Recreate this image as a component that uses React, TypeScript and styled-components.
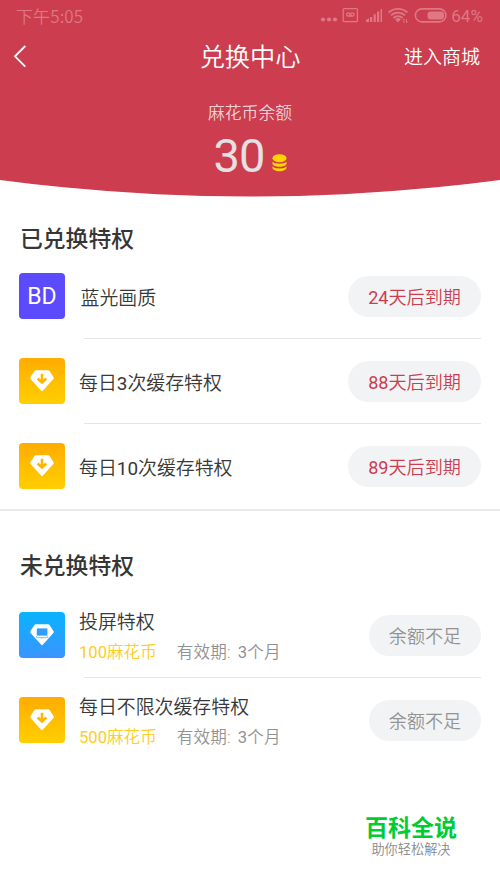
import React from "react";
import styled, { createGlobalStyle } from "styled-components";

const GlobalStyle = createGlobalStyle`
  * { box-sizing: border-box; }
  body {
    margin: 0;
    background: #fff;
    font-family: Roboto, "Noto Sans CJK SC", sans-serif;
    font-weight: 350;
    color: #3a3a3a;
  }
`;

const Screen = styled.div`
  width: 500px;
  height: 888px;
  display: flex;
  flex-direction: column;
  background: #fff;
  overflow: hidden;
`;

const Header = styled.header`
  flex: none;
  height: 197px;
  background: #cc3d4f;
  clip-path: circle(1902px at 50% -1705.5px);
`;

const StatusBar = styled.div`
  display: flex;
  align-items: center;
  justify-content: space-between;
  height: 32px;
  padding: 0 17px 0 16px;
  color: #dd7884;
  line-height: 30px;
`;

const Clock = styled.span`
  font-family: "Noto Sans CJK SC", sans-serif;
  font-size: 17px;
  letter-spacing: 0.1px;
  padding-bottom: 1px;
`;

const StatusIcons = styled.div`
  display: flex;
  align-items: center;
`;

const Battery = styled.span`
  margin-left: 3px;
  font-weight: 400;
  font-size: 17.1px;
`;

const TitleBar = styled.div`
  display: grid;
  grid-template-columns: 1fr auto 1fr;
  align-items: center;
  height: 50px;
  padding: 0 20px 0 13px;
  color: #fff;
`;

const Title = styled.h1`
  margin: 0;
  padding: 1px 0 0;
  margin-right: -7px;
  font-size: 25.2px;
  font-weight: 350;
  line-height: 50px;
`;

const StoreLink = styled.span`
  justify-self: end;
  padding-top: 1px;
  font-size: 19px;
  line-height: 50px;
`;

const BalanceLabel = styled.div`
  margin-top: 17px;
  text-align: center;
  font-size: 16.8px;
  line-height: 28px;
  color: #ecd0d3;
`;

const Balance = styled.div`
  display: flex;
  justify-content: center;
  align-items: center;
  height: 58px;
  color: #e3e1e1;
`;

const Amount = styled.span`
  margin-right: 7px;
  font-size: 47px;
  font-weight: 400;
  line-height: 58px;
  letter-spacing: -0.8px;
`;

const CoinIcon = styled.svg`
  margin-top: 13px;
`;

const Section = styled.section<{ $divided?: boolean }>`
  flex: none;
  padding-bottom: ${(p) => (p.$divided ? 1 : 0)}px;
  border-bottom: ${(p) => (p.$divided ? "2px solid #e9e9e9" : "none")};
`;

const SectionTitle = styled.h2<{ $height: number; $top: number }>`
  margin: 0;
  height: ${(p) => p.$height}px;
  padding: ${(p) => p.$top}px 0 0 20px;
  font-size: 22.8px;
  font-weight: 500;
  line-height: 34px;
  color: #363636;
`;

const Row = styled.div`
  display: grid;
  grid-template-columns: 46px 1fr auto;
  column-gap: 14px;
  align-items: center;
  height: 84px;
  padding: 0 19px;
`;

const Divider = styled.div`
  height: 1px;
  margin: 0 19px 0 84px;
  background: #e6e6e6;
`;

const Tile = styled.div<{ $bg: string }>`
  display: flex;
  align-items: center;
  justify-content: center;
  width: 46px;
  height: 46px;
  border-radius: 4px;
  background: ${(p) => p.$bg};
  color: #fff;
  font-size: 23px;
  font-weight: 400;
`;

const Details = styled.div<{ $indent?: boolean }>`
  padding: 5px 0 0 ${(p) => (p.$indent ? 1.5 : 0)}px;
`;

const Name = styled.div`
  font-size: 18.9px;
  line-height: 28px;
  color: #383838;
  white-space: nowrap;
`;

const Digits = styled.span`
  font-weight: 400;
`;

const Meta = styled.div`
  display: flex;
  gap: 20px;
  margin-top: 2px;
  font-size: 16.6px;
  line-height: 28px;
  white-space: nowrap;
`;

const Price = styled.span`
  color: #fdcd24;
`;

const Validity = styled.span`
  color: #929292;
  word-spacing: 3px;
  letter-spacing: 0.15px;
`;

const Pill = styled.div<{ $muted?: boolean }>`
  width: ${(p) => (p.$muted ? 112 : 133)}px;
  height: 41px;
  padding-top: 2px;
  border-radius: 21px;
  background: #f2f3f5;
  color: ${(p) => (p.$muted ? "#939393" : "#cc3d4f")};
  font-size: 18.1px;
  line-height: 39px;
  text-align: center;
`;

const Brand = styled.footer`
  align-self: flex-end;
  display: flex;
  flex-direction: column;
  align-items: center;
  width: 92px;
  margin: 52px 43px 0 0;
  white-space: nowrap;
`;

const BrandName = styled.div`
  font-size: 23px;
  font-weight: 700;
  line-height: 30px;
  color: #0c3;
`;

const BrandTag = styled.div`
  margin-top: -2px;
  font-size: 13.2px;
  line-height: 16px;
  color: #888;
`;

const BackIcon = () => (
  <svg width="14" height="28" viewBox="0 0 14 28" fill="none" stroke="#fff" strokeWidth="1.8">
    <path d="M12.3 2 2 12.300l10.300 10.300" />
  </svg>
);

const SystemIcons = () => (
  <svg width="128" height="20" viewBox="0 0 128 20" fill="none" stroke="#dd7884" strokeWidth="1.3">
    <g fill="#dd7884" stroke="none">
      <circle cx="3" cy="13.500" r="2.100" />
      <circle cx="9" cy="13.500" r="2.100" />
      <circle cx="15" cy="13.500" r="2.100" />
      <path d="M46 16v-2l3-2v4zM50 16v-5h2.200v5zM53.600 16V8.300h2.200V16zM57 16V5.600h2.200V16zM60.500 16V3h1.600v13z" />
      <path d="m78 16.400-2.800-3.100a4.200 4.200 0 0 1 5.600 0z" />
      <rect x="107.500" y="5.500" width="16.500" height="8" rx="3" />
    </g>
    <rect x="23.200" y="2.700" width="14.200" height="13" rx="1" />
    <circle cx="28.400" cy="8.500" r="1.700" />
    <circle cx="32.400" cy="8.500" r="1.700" />
    <path d="M28.400 10.200h4" />
    <path d="M68.600 6.500a14 14 0 0 1 18.800 0M71 9.400a10 10 0 0 1 14 0M73.400 12a6.700 6.700 0 0 1 9.200 0" strokeWidth="1.8" />
    <path d="M84 13v4m-1.200-2.700 1.200-1.400M86.500 13v4m0 0 1.200-1.400" strokeWidth=".9" />
    <rect x="95.400" y="2.900" width="30.500" height="13" rx="6.500" strokeWidth="1.6" />
  </svg>
);

const Coins = () => (
  <CoinIcon width="15" height="18" viewBox="0 0 15 18" fill="#ffd400">
    <ellipse cx="7.500" cy="4.200" rx="7" ry="4" />
    <path d="M.5 7.600c1.800 3 12.200 3 14 0v1.800c0 4.300-14 4.300-14 0z" />
    <path d="M.5 12.200c1.800 3 12.200 3 14 0v1.600c0 4.600-14 4.600-14 0z" />
  </CoinIcon>
);

const Gem = ({ screen }: { screen?: boolean }) => (
  <svg width="26" height="24" viewBox="0 0 26 24">
    <path
      d="M7 1.200h12q1 0 1.600.8l4 6.200q.6 1-.2 1.800L14 21.600q-1 1.200-2 0L1.600 10q-.8-.8-.2-1.800L5.400 2Q6 1.200 7 1.200z"
      fill="#fff"
    />
    {screen ? (
      <>
        <path d="M7.800 5.400h10.600v7.200H7.800z" fill="#2d9dff" />
        <path d="M7.500 13v1.700h11.200V13M11.500 14.800h3.200" fill="none" stroke="#70b9ff" strokeWidth=".8" />
      </>
    ) : (
      <path d="M13 4.700v8.500M8.700 9.500 13 13.500l4.300-4" fill="none" stroke="#ffb600" strokeWidth="2.600" />
    )}
  </svg>
);

const Label = ({ text }: { text: string }) => (
  <>
    {text.split(/(\d+)/).map((part, i) => (/\d/.test(part) ? <Digits key={i}>{part}</Digits> : part))}
  </>
);

const GOLD = "linear-gradient(#ffac00, #ffcf00)";
const BLUE = "linear-gradient(#08b3ff, #3b94ff)";

const owned = [
  { name: "蓝光画质", left: "24天后到期", bd: true },
  { name: "每日3次缓存特权", left: "88天后到期", bd: false },
  { name: "每日10次缓存特权", left: "89天后到期", bd: false },
];

const available = [
  { name: "投屏特权", price: "100麻花币", screen: true },
  { name: "每日不限次缓存特权", price: "500麻花币", screen: false },
];

export default function App() {
  return (
    <Screen>
      <GlobalStyle />
      <Header>
        <StatusBar>
          <Clock>下午5:05</Clock>
          <StatusIcons>
            <SystemIcons />
            <Battery>64%</Battery>
          </StatusIcons>
        </StatusBar>
        <TitleBar>
          <BackIcon />
          <Title>兑换中心</Title>
          <StoreLink>进入商城</StoreLink>
        </TitleBar>
        <BalanceLabel>麻花币余额</BalanceLabel>
        <Balance>
          <Amount>30</Amount>
          <Coins />
        </Balance>
      </Header>
      <Section $divided>
        <SectionTitle $height={57} $top={26}>已兑换特权</SectionTitle>
        {owned.map((item, i) => (
          <React.Fragment key={item.name}>
            <Row>
              <Tile $bg={item.bd ? "#5b4bfc" : GOLD}>{item.bd ? "BD" : <Gem />}</Tile>
              <Details $indent={item.bd}>
                <Name><Label text={item.name} /></Name>
              </Details>
              <Pill><Label text={item.left} /></Pill>
            </Row>
            {i < owned.length - 1 && <Divider />}
          </React.Fragment>
        ))}
      </Section>
      <Section>
        <SectionTitle $height={82} $top={39}>未兑换特权</SectionTitle>
        {available.map((item, i) => (
          <React.Fragment key={item.name}>
            <Row>
              <Tile $bg={item.screen ? BLUE : GOLD}>
                <Gem screen={item.screen} />
              </Tile>
              <Details>
                <Name>{item.name}</Name>
                <Meta>
                  <Price><Label text={item.price} /></Price>
                  <Validity><Label text="有效期: 3个月" /></Validity>
                </Meta>
              </Details>
              <Pill $muted>余额不足</Pill>
            </Row>
            {i < available.length - 1 && <Divider />}
          </React.Fragment>
        ))}
      </Section>
      <Brand>
        <BrandName>百科全说</BrandName>
        <BrandTag>助你轻松解决</BrandTag>
      </Brand>
    </Screen>
  );
}
